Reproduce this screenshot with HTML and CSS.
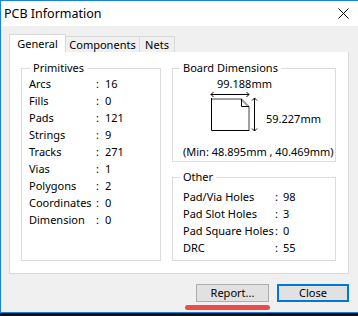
FILE: index.html
```html
<!DOCTYPE html>
<html lang="en">
<head>
  <meta charset="UTF-8">
  <title>PCB Information</title>
  <link rel="stylesheet" href="styles.css">
</head>
<body>
  <div class="window">
    <div class="titlebar">
      <span class="title">PCB Information</span>
      <svg class="close-x" width="11" height="11" viewBox="0 0 11 11">
        <path d="M0.5 0.5 L10.5 10.5 M10.5 0.5 L0.5 10.5" stroke="#000" stroke-width="1" fill="none"/>
      </svg>
    </div>

    <div class="body">
      <div class="tabs">
        <div class="tab active">General</div>
        <div class="tab tab-components">Components</div>
        <div class="tab tab-nets">Nets</div>
      </div>

      <div class="panel">
        <fieldset class="group primitives">
          <legend>Primitives</legend>
          <div class="rows">
            <span>Arcs</span><span>:</span><span>16</span>
            <span>Fills</span><span>:</span><span>0</span>
            <span>Pads</span><span>:</span><span>121</span>
            <span>Strings</span><span>:</span><span>9</span>
            <span>Tracks</span><span>:</span><span>271</span>
            <span>Vias</span><span>:</span><span>1</span>
            <span>Polygons</span><span>:</span><span>2</span>
            <span>Coordinates</span><span>:</span><span>0</span>
            <span>Dimension</span><span>:</span><span>0</span>
          </div>
        </fieldset>

        <div class="right-col">
          <fieldset class="group board">
            <legend>Board Dimensions</legend>
            <div class="dims">
              <div class="width-label">99.188mm</div>
              <div class="drawing">
                <svg width="52" height="40" viewBox="0 0 52 40">
                  <!-- horizontal arrow -->
                  <path d="M1 2.5 H39" stroke="#000" fill="none"/>
                  <path d="M3.5 0 L1 2.5 L3.5 5 M36.5 0 L39 2.5 L36.5 5" stroke="#000" fill="none"/>
                  <!-- board outline -->
                  <path d="M1 7 H31 L39 15 V39" stroke="#a0a0a0" stroke-width="2" fill="none"/>
                  <path d="M1.5 6 V38.5 H39" stroke="#000" fill="none"/>
                  <path d="M31.5 7 V14.5 H39" stroke="#000" fill="none"/>
                  <!-- vertical arrow -->
                  <path d="M44.5 6 V39" stroke="#000" fill="none"/>
                  <path d="M42 8.5 L44.5 6 L47 8.5 M42 36.5 L44.5 39 L47 36.5" stroke="#000" fill="none"/>
                </svg>
                <span class="height-label">59.227mm</span>
              </div>
              <div class="min-label">(Min: 48.895mm , 40.469mm)</div>
            </div>
          </fieldset>

          <fieldset class="group other">
            <legend>Other</legend>
            <div class="rows">
              <span>Pad/Via Holes</span><span>:</span><span>98</span>
              <span>Pad Slot Holes</span><span>:</span><span>3</span>
              <span>Pad Square Holes</span><span>:</span><span>0</span>
              <span>DRC</span><span>:</span><span>55</span>
            </div>
          </fieldset>
        </div>
      </div>

      <div class="buttons">
        <div class="report-wrap">
          <button class="btn">Report...</button>
          <div class="underline"></div>
        </div>
        <button class="btn btn-default">Close</button>
      </div>
    </div>
  </div>
  <div class="taskbar"></div>
</body>
</html>
```

FILE: styles.css
```css
* {
  box-sizing: border-box;
}

body {
  margin: 0;
  font-family: "Noto Sans", Arial, sans-serif;
  font-size: 11px;
  color: #000;
  background: #f0f0f0;
}

.window {
  width: 358px;
  height: 313px;
  border-left: 1px solid #1883d7;
  border-top: 1px solid #1883d7;
  border-bottom: 1px solid #1883d7;
  background: #f0f0f0;
}

.titlebar {
  height: 25px;
  background: #fff;
  display: flex;
  align-items: center;
  justify-content: space-between;
  padding: 0 9px 0 3px;
}

.title {
  font-size: 12.5px;
}

.close-x {
  display: block;
}

.body {
  padding: 8px 9px 0 8px;
}

.tabs {
  display: flex;
  align-items: flex-end;
  height: 18px;
}

.tab {
  height: 16px;
  line-height: 15px;
  text-align: center;
  border: 1px solid #d9d9d9;
  border-bottom: none;
  border-left: none;
  background: #f0f0f0;
}

.tab.active {
  width: 57px;
  height: 18px;
  line-height: 17px;
  background: #fff;
  border-left: 1px solid #d9d9d9;
}

.tab-components {
  width: 74px;
}

.tab-nets {
  width: 35px;
}

.panel {
  height: 222px;
  background: #fff;
  border: 1px solid #d9d9d9;
  border-top: none;
  padding: 9px 11px 0 11px;
  display: flex;
  gap: 11px;
}

.group {
  margin: 0;
  min-width: 0;
  border: 1px solid #dcdcdc;
  padding: 0 0 0 7px;
}

.group legend {
  padding: 0 3px;
  line-height: 14px;
}

.primitives legend {
  margin-left: 1px;
}

.primitives {
  width: 140px;
  height: 200px;
}

.rows {
  display: grid;
  line-height: 17px;
}

.primitives .rows {
  grid-template-columns: 67px 9px auto;
}

.right-col {
  display: flex;
  flex-direction: column;
  gap: 8px;
  width: 164px;
}

.board {
  height: 101px;
}

.dims {
  display: flex;
  flex-direction: column;
  padding-left: 3px;
}

.width-label {
  margin-left: 34px;
  line-height: 17px;
}

.drawing {
  display: flex;
  align-items: center;
  padding-left: 27px;
  gap: 4px;
}

.drawing svg {
  display: block;
}

.height-label {
  margin-top: 12px;
}

.min-label {
  margin-top: 13px;
  line-height: 14px;
}

.other {
  height: 91px;
}

.other .rows {
  grid-template-columns: 92px 8px auto;
  padding: 4px 0 0 3px;
}

.buttons {
  display: flex;
  justify-content: flex-end;
  gap: 8px;
  margin-top: 10px;
}

.report-wrap {
  position: relative;
}

.btn {
  display: block;
  font-family: inherit;
  font-size: 11px;
  width: 73px;
  height: 18px;
  padding: 0;
  line-height: 14px;
  background: #e1e1e1;
  border: 1px solid #adadad;
  color: #000;
}

.btn-default {
  width: 72px;
  border: 2px solid #0078d7;
}

.underline {
  position: absolute;
  left: -11px;
  top: 21px;
  width: 85px;
  height: 5px;
  border-radius: 3px;
  background: #ec4c4c;
}

.taskbar {
  height: 3px;
  background: #111;
}
```
